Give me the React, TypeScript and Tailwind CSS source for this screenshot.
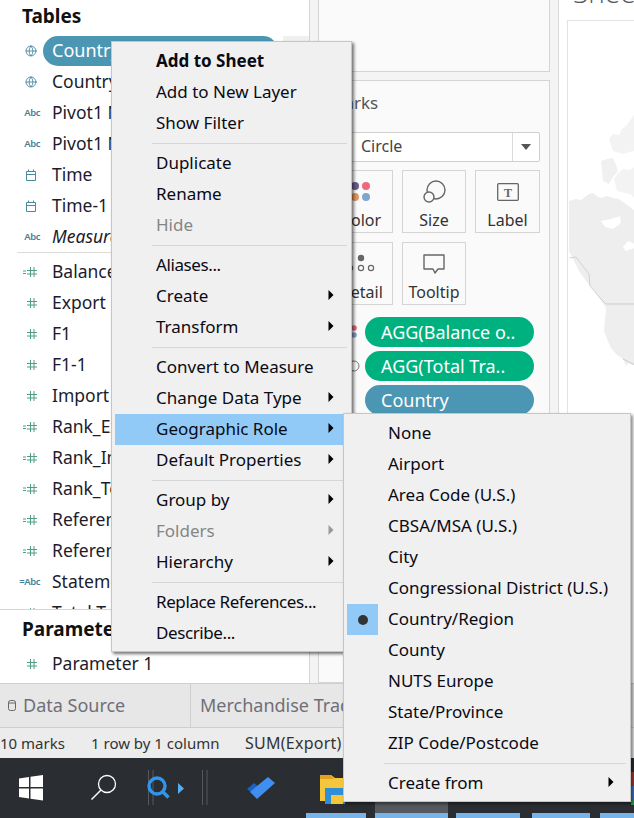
import { Globe } from "lucide-react";

const font = { fontFamily: '"Noto Sans", "Open Sans", sans-serif' };

function Hash({ calc }: { calc?: boolean }) {
  return (
    <svg width="24" height="12" viewBox="0 0 24 12" className="shrink-0">
      {calc && <path d="M4 5h3M4 7.5h3" stroke="#4f9e82" strokeWidth="1" />}
      <path d="M11.5 1v10M15 1v10M8 4.5h10M8 8h10" stroke="#4f9e82" strokeWidth="1" fill="none" />
    </svg>
  );
}

function FieldIcon({ type }: { type: string }) {
  if (type === "globe")
    return (
      <div className="w-[24px] flex justify-center">
        <Globe size={12} color="#4a88a3" strokeWidth={1.8} />
      </div>
    );
  if (type === "abc" || type === "cabc")
    return (
      <div className="w-[24px] pr-[3px] text-right text-[9.5px] font-semibold text-[#4a7f99] leading-none tracking-tighter whitespace-nowrap">
        {type === "cabc" ? "=Abc" : "Abc"}
      </div>
    );
  if (type === "date")
    return (
      <svg width="24" height="12" viewBox="0 0 24 12" className="shrink-0">
        <path d="M7.5 2.5h9v9h-9zM7.5 5.5h9M9.5 0.5v2M14.5 0.5v2" stroke="#4a88a3" strokeWidth="1" fill="none" />
      </svg>
    );
  return <Hash calc={type === "calc"} />;
}

function FieldRow({ type, name, italic }: { type: string; name: string; italic?: boolean }) {
  return (
    <div className="h-[31px] flex items-center">
      <div className="w-[19px]" />
      <FieldIcon type={type} />
      <div className={`ml-[9px] text-[17.5px] text-[#1c1c2c] whitespace-nowrap ${italic ? "italic" : ""}`}>{name}</div>
    </div>
  );
}

function Arrow({ color = "#000" }: { color?: string }) {
  return (
    <svg width="6" height="10" viewBox="0 0 6 10">
      <path d="M0.5 0L5.5 5L0.5 10Z" fill={color} />
    </svg>
  );
}

type Item = { t: string; bold?: boolean; off?: boolean; sub?: boolean; hi?: boolean; check?: boolean; tight?: boolean } | null;

const mainMenu: Item[] = [
  { t: "Add to Sheet", bold: true },
  { t: "Add to New Layer" },
  { t: "Show Filter" },
  null,
  { t: "Duplicate" },
  { t: "Rename" },
  { t: "Hide", off: true },
  null,
  { t: "Aliases...", tight: true },
  { t: "Create", sub: true },
  { t: "Transform", sub: true },
  null,
  { t: "Convert to Measure" },
  { t: "Change Data Type", sub: true },
  { t: "Geographic Role", sub: true, hi: true },
  { t: "Default Properties", sub: true },
  null,
  { t: "Group by", sub: true },
  { t: "Folders", sub: true, off: true },
  { t: "Hierarchy", sub: true },
  null,
  { t: "Replace References...", tight: true },
  { t: "Describe...", tight: true },
];

const subMenu: Item[] = [
  { t: "None" },
  { t: "Airport" },
  { t: "Area Code (U.S.)" },
  { t: "CBSA/MSA (U.S.)" },
  { t: "City" },
  { t: "Congressional District (U.S.)" },
  { t: "Country/Region", check: true },
  { t: "County" },
  { t: "NUTS Europe" },
  { t: "State/Province" },
  { t: "ZIP Code/Postcode" },
  null,
  { t: "Create from", sub: true },
];

function Menu({ items, textLeft, arrowRight, sepLeft }: { items: Item[]; textLeft: string; arrowRight: string; sepLeft: string }) {
  return (
    <div className="py-[4px]">
      {items.map((it, i) =>
        it === null ? (
          <div key={i} className="h-[9px] flex items-center">
            <div className={`h-px flex-1 bg-[#d6d6d6] mr-[4px] ${sepLeft}`} />
          </div>
        ) : (
          <div
            key={i}
            className={`h-[31px] flex items-center justify-between relative ${it.hi ? "bg-[#91c9f7]" : ""} ${it.off ? "text-[#858585]" : "text-[#0a0a14]"} ${it.bold ? "font-bold" : ""}`}
          >
            {it.check && (
              <div className="absolute left-0 top-0 w-[31px] h-[31px] bg-[#91c9f7] flex items-center justify-center">
                <div className="w-[10px] h-[10px] rounded-full bg-[#333]" />
              </div>
            )}
            <span className={`whitespace-nowrap pb-[2px] ${textLeft} ${it.tight ? "tracking-[-0.4px]" : ""}`}>{it.t}</span>
            {it.sub && (
              <span className={`flex pb-[3px] ${arrowRight}`}>
                <Arrow color={it.off ? "#999" : "#000"} />
              </span>
            )}
          </div>
        ),
      )}
    </div>
  );
}

function Card({ label, children }: { label: string; children: React.ReactNode }) {
  return (
    <div className="h-[63px] border border-[#d4d4d4] flex flex-col items-center">
      <div className="h-[37px] flex items-center justify-center mt-[2px]">{children}</div>
      <div className="text-[16px] leading-[20px] text-[#333] whitespace-nowrap">{label}</div>
    </div>
  );
}

function Pill({ color, text }: { color: string; text: string }) {
  return (
    <div className={`h-[30px] rounded-full ${color} text-white text-[18px] flex items-center pl-[16px] whitespace-nowrap`}>
      {text}
    </div>
  );
}

export default function App() {
  const fields1 = [
    { type: "globe", name: "Country (Custom)" },
    { type: "abc", name: "Pivot1 Names" },
    { type: "abc", name: "Pivot1 Names-1" },
    { type: "date", name: "Time" },
    { type: "date", name: "Time-1" },
    { type: "abc", name: "Measure Names", italic: true },
  ];
  const fields2 = [
    { type: "calc", name: "Balance of Trade" },
    { type: "num", name: "Export" },
    { type: "num", name: "F1" },
    { type: "num", name: "F1-1" },
    { type: "num", name: "Import" },
    { type: "calc", name: "Rank_Export" },
    { type: "calc", name: "Rank_Import" },
    { type: "calc", name: "Rank_Total" },
    { type: "calc", name: "Reference 1" },
    { type: "calc", name: "Reference 2" },
    { type: "cabc", name: "Statement" },
    { type: "num", name: "Total Trade" },
  ];
  return (
    <div className="relative w-[634px] h-[818px] overflow-hidden bg-white flex flex-col" style={font}>
      <div className="flex h-[683px] shrink-0">
        {/* Data pane */}
        <div className="w-[310px] shrink-0 border-r border-[#d4d4d4] flex flex-col">
          <div className="h-[610px] overflow-hidden border-b border-[#d4d4d4]">
            <div className="h-[35px] pl-[22px] pt-[1px] text-[19px] leading-[30px] font-bold text-[#111]">Tables</div>
            <div className="h-[31px] flex items-center relative">
              <div className="w-[19px]" />
              <FieldIcon type="globe" />
              <div className="ml-0 w-[235px] h-[30px] rounded-full bg-[#4b96b2] text-white text-[18px] pl-[9px] flex items-center">
                Country
              </div>
              <div className="absolute right-0 top-[1px] w-[26px] h-[5px] bg-[#f0f0f0]" />
            </div>
            {fields1.map((f) => (
              <FieldRow key={f.name} {...f} />
            ))}
            <div className="h-[4px]">
              <div className="h-px bg-[#dcdcdc] ml-[17px]" />
            </div>
            {fields2.map((f) => (
              <FieldRow key={f.name} {...f} />
            ))}
          </div>
          <div className="h-[38px] pl-[22px] text-[19px] leading-[38px] font-bold text-[#111]">Parameters</div>
          <div className="mt-[0px]">
            <FieldRow type="num" name="Parameter 1" />
          </div>
        </div>

        {/* Middle shelves */}
        <div className="w-[249px] shrink-0 bg-[#f4f4f4] pl-[8px] flex flex-col border-r border-[#d9d9d9]">
          <div className="h-[72px] w-[232px] bg-[#fafafa] border-r border-b border-l border-[#d4d4d4]" />
          <div className="mt-[8px] flex-1 w-[232px] bg-[#fafafa] border border-[#d4d4d4] pl-[10px] pr-[9px]">
            <div className="h-[51px] text-[17px] leading-[44px] text-[#555]">Marks</div>
            <div className="h-[30px] border border-[#cfcfcf] rounded-[2px] bg-white flex items-center">
              <div className="pl-[31px] pb-[2px] flex-1 text-[16px] text-[#444]">Circle</div>
              <div className="w-[27px] h-full border-l border-[#d9d9d9] flex items-center justify-center">
                <svg width="10" height="6" viewBox="0 0 10 6">
                  <path d="M0 0h10L5 6z" fill="#555" />
                </svg>
              </div>
            </div>
            <div className="mt-[8px] grid grid-cols-[64px_64px_65px] gap-[9px]">
              <Card label="Color">
                <svg width="24" height="24" viewBox="0 0 24 24">
                  <circle cx="6" cy="6" r="4" fill="#6b5b8c" />
                  <circle cx="17" cy="6" r="4" fill="#f0667c" />
                  <circle cx="6" cy="17" r="4" fill="#e2975f" />
                  <circle cx="17" cy="17" r="4" fill="#7fa5d0" />
                </svg>
              </Card>
              <Card label="Size">
                <svg width="24" height="24" viewBox="0 0 24 24" fill="none" stroke="#666" strokeWidth="1.4">
                  <circle cx="14" cy="10" r="9" />
                  <circle cx="7" cy="17" r="5" fill="#fafafa" />
                </svg>
              </Card>
              <Card label="Label">
                <svg width="22" height="18" viewBox="0 0 22 18">
                  <rect x="0.7" y="0.7" width="20.6" height="16.6" rx="1" fill="none" stroke="#666" strokeWidth="1.3" />
                  <text x="11" y="13.5" textAnchor="middle" fontSize="12" fontWeight="700" fill="#666" fontFamily="Liberation Serif, serif">T</text>
                </svg>
              </Card>
              <Card label="Detail">
                <svg width="34" height="22" viewBox="0 0 34 22" fill="none" stroke="#666" strokeWidth="1.2">
                  <circle cx="17" cy="5" r="3.2" fill="#666" stroke="none" />
                  <circle cx="6" cy="15" r="2.6" />
                  <circle cx="17" cy="15" r="2.6" />
                  <circle cx="27" cy="15" r="2.6" />
                </svg>
              </Card>
              <Card label="Tooltip">
                <svg width="24" height="22" viewBox="0 0 24 22" fill="none" stroke="#666" strokeWidth="1.4">
                  <path d="M2 2h20v14h-6l-3 4-2-4H2z" strokeLinejoin="round" />
                </svg>
              </Card>
            </div>
            <div className="mt-[12px] flex flex-col gap-[4px]">
              <div className="flex items-center">
                <div className="w-[36px] flex justify-end pr-[5px]">
                  <svg width="12" height="14" viewBox="0 0 12 14">
                    <circle cx="6" cy="3" r="2.8" fill="#e0667c" />
                    <circle cx="6" cy="10" r="2.8" fill="#7f9fc9" />
                  </svg>
                </div>
                <div className="w-[169px]"><Pill color="bg-[#00b180]" text="AGG(Balance o.." /></div>
              </div>
              <div className="flex items-center">
                <div className="w-[36px] flex justify-end pr-[5px]">
                  <svg width="12" height="12" viewBox="0 0 12 12">
                    <circle cx="6" cy="6" r="5" fill="none" stroke="#777" />
                  </svg>
                </div>
                <div className="w-[169px]"><Pill color="bg-[#00b180]" text="AGG(Total Tra.." /></div>
              </div>
              <div className="flex items-center">
                <div className="w-[36px]" />
                <div className="w-[169px]"><Pill color="bg-[#4b96b2]" text="Country" /></div>
              </div>
            </div>
          </div>
        </div>

        {/* Sheet */}
        <div className="flex-1 min-w-0 overflow-hidden pl-[8px]">
          <div className="h-[20px] overflow-hidden">
            <div className="-mt-[27px] pl-[6px] text-[28px] leading-[38px] font-light text-[#555] whitespace-nowrap" style={{ fontFamily: '"Open Sans", sans-serif' }}>
              Sheet 1
            </div>
          </div>
          <div className="h-[663px] border-l border-t border-[#e3e3e3]">
            <svg width="67" height="400" viewBox="567 20 67 400">
              <path
                d="M568 200L575 198L580 199L588 193L592 192L597 196L600 197L606 195L612 197L618 198L622 201L628 205L634 210V377L628 370L622 358L616 354L610 347L606 338L603 330L604 318L605 307L599 298L593 290L585 280L578 270L568 250Z"
                fill="#eeeeee"
              />
              <path d="M608 138L612 133L618 134L621 128L624 126L628 121L634 112V150L628 151L622 153L612 150L610 144Z" fill="#f3f3f3" />
              <path d="M600 160L606 158L612 157L615 164L617 170L612 176L608 183L602 180Z" fill="#f0f0f0" />
              <path d="M613 178L617 172L622 168L628 169L634 166V197L629 193L624 192L616 190Z" fill="#f3f3f3" />
              <path d="M600 220L610 218L619 215L620 222L612 228L604 226Z" fill="#fff" />
              <path d="M622 246L627 240L634 243V247L625 250Z" fill="#fff" />
              <path d="M568 257L575 256L588 273L589 285L600 298L605 303" fill="none" stroke="#c4c4c4" strokeWidth="0.7" />
              <path d="M605 303H634M622 358L634 364" fill="none" stroke="#bcbcbc" strokeWidth="0.7" />
              <path d="M627 362L634 365V381L629 376L625 366Z" fill="#fff" />
            </svg>
          </div>
        </div>
      </div>

      {/* Tabs */}
      <div className="h-[45px] shrink-0 bg-[#e7e7e7] border-t border-b border-[#cfcfcf] flex items-center text-[18px] text-[#6f6f78] whitespace-nowrap overflow-hidden">
        <div className="w-[191px] h-full border-r border-[#cfcfcf] flex items-center pl-[8px]">
          <svg width="8" height="11" viewBox="0 0 8 11" fill="none" stroke="#666">
            <rect x="0.5" y="0.5" width="7" height="10" rx="2" />
            <path d="M0.5 3h7" />
          </svg>
          <span className="ml-[7px]">Data Source</span>
        </div>
        <div className="pl-[9px]">Merchandise Trade</div>
      </div>
      {/* Status */}
      <div className="h-[30px] shrink-0 bg-[#ececec] flex items-center text-[15px] text-[#333] whitespace-nowrap">
        <div className="w-[91px]">10 marks</div>
        <div className="w-[154px]">1 row by 1 column</div>
        <div className="text-[16px] tracking-[0.25px]">SUM(Export)</div>
      </div>
      {/* Taskbar */}
      <div className="flex-1 bg-[#2a2e32] relative flex items-start overflow-hidden">
        <svg width="350" height="60" viewBox="0 0 350 60" className="shrink-0">
          <path d="M19 20.5l10-1.5v10H19zM30.5 18.8L43 17v12H30.5zM19 30.5h10v10l-10-1.5zM30.5 30.5H43v12l-12.5-1.8z" fill="#fff" />
          <circle cx="107" cy="26" r="8.5" fill="none" stroke="#fff" strokeWidth="1.3" />
          <path d="M101 32l-9.5 9.5" stroke="#fff" strokeWidth="1.5" />
          <path d="M148.5 12v35M153 12v35M202.5 12v35M207 12v35" stroke="#55595d" strokeWidth="1" />
          <circle cx="157" cy="28" r="8" fill="none" stroke="#2f95ee" strokeWidth="3.4" />
          <path d="M163 34l5.5 5.5" stroke="#2f95ee" strokeWidth="3.6" />
          <path d="M178 25l6 5.5-6 5.5z" fill="#53aef5" />
          <path d="M247 31l7-6 6 5-7 6z" fill="#1f5fbf" />
          <path d="M250 34l7-6 11-9 7 6-18 16z" fill="#3f8ff0" />
          <path d="M320 17h11l4 3h10v23h-25z" fill="#f4c63c" />
          <path d="M320 17h11l3 4h-14z" fill="#e2a21c" />
          <rect x="325" y="30" width="20" height="16" fill="#2e8fd9" />
          <rect x="331" y="37" width="12" height="9" fill="#f4c63c" />
        </svg>
        <div className="absolute left-[375px] top-[32px] w-[73px] h-[28px] bg-[#565a5e]" />
        <div className="absolute left-[631px] top-[14px] w-[3px] h-[14px] bg-[#a93a2e]" />
        <div className="absolute left-[631px] top-[28px] w-[3px] h-[14px] bg-[#3a74c9]" />
        <div className="absolute left-[631px] top-[42px] w-[3px] h-[5px] bg-[#2f9e4f]" />
        <div className="absolute left-[306px] bottom-0 w-[60px] h-[5px] bg-[#76b4ea]" />
        <div className="absolute left-[375px] bottom-0 w-[73px] h-[5px] bg-[#76b4ea]" />
        <div className="absolute left-[456px] bottom-0 w-[64px] h-[5px] bg-[#76b4ea]" />
        <div className="absolute left-[532px] bottom-0 w-[58px] h-[5px] bg-[#76b4ea]" />
        <div className="absolute left-[600px] bottom-0 w-[34px] h-[5px] bg-[#76b4ea]" />
      </div>

      {/* Context menu */}
      <div className="absolute left-[111px] top-[41px] w-[241px] h-[611px] bg-[#f0f0f0] border border-[#c6c6c6] shadow-[2px_2px_3px_rgba(0,0,0,0.55)] pl-[3px] text-[17px]">
        <Menu items={mainMenu} textLeft="pl-[41px]" arrowRight="pr-[17px]" sepLeft="ml-[37px]" />
      </div>
      {/* Submenu */}
      <div className="absolute left-[343px] top-[413px] w-[288px] h-[389px] bg-[#f0f0f0] border border-[#c6c6c6] shadow-[2px_2px_3px_rgba(0,0,0,0.45)] pl-[3px] text-[17px]">
        <Menu items={subMenu} textLeft="pl-[41px]" arrowRight="pr-[16px]" sepLeft="ml-[37px]" />
      </div>
    </div>
  );
}
